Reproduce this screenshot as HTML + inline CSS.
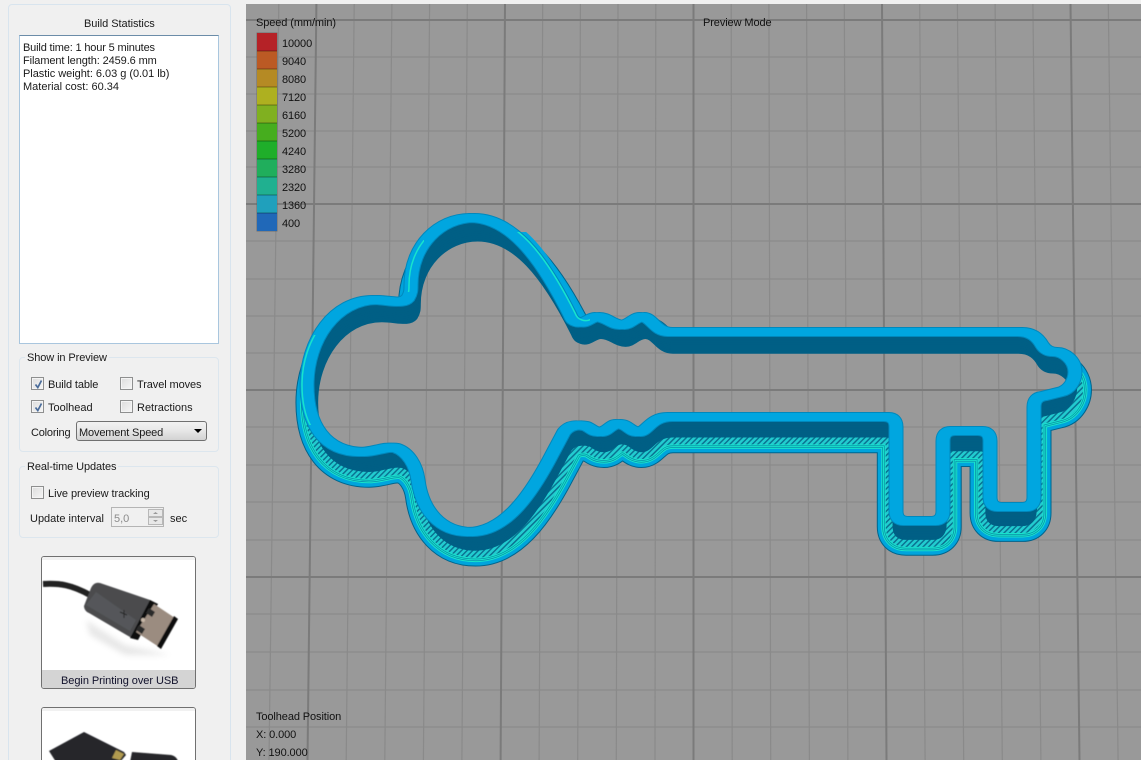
<!DOCTYPE html>
<html><head><meta charset="utf-8"><style>
html,body{margin:0;padding:0;width:1141px;height:760px;overflow:hidden;background:#f0f0f0}
body{position:relative;font-family:"Liberation Sans",sans-serif;font-size:11px;color:#1a1a1a}
.a{position:absolute;white-space:nowrap;line-height:13px;margin-top:1px}
.gb{position:absolute;border:1px solid #dce6ee;border-radius:4px;box-sizing:border-box}
.cb{position:absolute;width:13px;height:13px;box-sizing:border-box;border:1px solid #8e8f8f;background:linear-gradient(135deg,#dcdcdc,#f6f6f6);box-shadow:inset 0 0 0 1px #f4f4f4}
.cb svg{position:absolute;left:1px;top:1px}
.v{position:absolute;white-space:nowrap;line-height:13px;font-size:11px;color:#111;margin-top:1px;letter-spacing:-.1px}
</style></head><body>
<div class="gb" style="left:8px;top:4px;width:223px;height:780px;border-color:#d8e4ee"></div>
<div class="a" style="left:84px;top:17px;letter-spacing:-.05px">Build Statistics</div>
<div style="position:absolute;left:19px;top:35px;width:200px;height:309px;box-sizing:border-box;background:#fff;border:1px solid #a9c6de;border-top-color:#6b8ca8"></div>
<div class="a" style="left:23px;top:41px;letter-spacing:-.16px">Build time: 1 hour 5 minutes</div>
<div class="a" style="left:23px;top:54px;letter-spacing:-.1px">Filament length: 2459.6 mm</div>
<div class="a" style="left:23px;top:67px;letter-spacing:-.03px">Plastic weight: 6.03 g (0.01 lb)</div>
<div class="a" style="left:23px;top:80px;">Material cost: 60.34</div>

<div class="gb" style="left:19px;top:357px;width:200px;height:95px"></div>
<div class="a" style="left:25px;top:351px;background:#f0f0f0;padding:0 2px;letter-spacing:-.1px">Show in Preview</div>
<div class="cb" style="left:31px;top:377px"><svg width="11" height="11"><path d="M2.5 5.5L4.8 8.5L8.5 1.5" fill="none" stroke="#4a6c9a" stroke-width="1.7"/></svg></div>
<div class="a" style="left:48px;top:378px;letter-spacing:-.1px">Build table</div>
<div class="cb" style="left:120px;top:377px"></div>
<div class="a" style="left:137px;top:378px;letter-spacing:-.1px">Travel moves</div>
<div class="cb" style="left:31px;top:400px"><svg width="11" height="11"><path d="M2.5 5.5L4.8 8.5L8.5 1.5" fill="none" stroke="#4a6c9a" stroke-width="1.7"/></svg></div>
<div class="a" style="left:48px;top:401px">Toolhead</div>
<div class="cb" style="left:120px;top:400px"></div>
<div class="a" style="left:137px;top:401px">Retractions</div>
<div class="a" style="left:31px;top:426px;letter-spacing:-.2px">Coloring</div>
<div style="position:absolute;left:76px;top:421px;width:131px;height:20px;box-sizing:border-box;border:1px solid #707070;border-radius:3px;background:linear-gradient(#f2f2f2,#e8e8e8 45%,#d2d2d2)"></div>
<div class="a" style="left:79px;top:426px;letter-spacing:-.15px">Movement Speed</div>
<svg style="position:absolute;left:193px;top:428px" width="10" height="6"><path d="M1 1H9L5 5Z" fill="#000"/></svg>

<div class="gb" style="left:19px;top:466px;width:200px;height:72px"></div>
<div class="a" style="left:25px;top:460px;background:#f0f0f0;padding:0 2px;letter-spacing:-.1px">Real-time Updates</div>
<div class="cb" style="left:31px;top:486px"></div>
<div class="a" style="left:48px;top:487px;letter-spacing:-.05px">Live preview tracking</div>
<div class="a" style="left:30px;top:512px;">Update interval</div>
<div style="position:absolute;left:111px;top:507px;width:53px;height:20px;box-sizing:border-box;border:1px solid #b4b4b4;background:#f0f0f0"></div>
<div class="a" style="left:114px;top:512px;color:#8a8a8a">5,0</div>
<svg style="position:absolute;left:148px;top:509px" width="15" height="16"><rect x=".5" y=".5" width="14" height="7" fill="#e8e8e8" stroke="#b8b8b8"/><rect x=".5" y="8.5" width="14" height="7" fill="#e8e8e8" stroke="#b8b8b8"/><path d="M5 5L7.500 3L10 5ZM5 11L7.500 13L10 11Z" fill="#999"/></svg>
<div class="a" style="left:170px;top:512px">sec</div>

<!-- USB button -->
<div style="position:absolute;left:41px;top:556px;width:155px;height:133px;box-sizing:border-box;border:1px solid #707070;border-radius:3px;background:#fff;overflow:hidden">
<div style="position:absolute;left:0;top:0;right:0;height:3px;background:#f1f1f1"></div>
<div style="position:absolute;left:0;top:113px;right:0;bottom:0;background:#d4d4d4"></div>
</div>
<div class="a" style="left:61px;top:674px;color:#10102a;letter-spacing:-.05px">Begin Printing over USB</div>
<svg style="position:absolute;left:42px;top:560px" width="153" height="110" viewBox="42 560 153 110">
<defs><filter id="b1" x="-30%" y="-30%" width="160%" height="160%"><feGaussianBlur stdDeviation="3"/></filter><filter id="b0"><feGaussianBlur stdDeviation=".5"/></filter></defs>
<path d="M86 620L125 645L170 655L125 655L90 635Z" fill="#ccc" opacity=".45" filter="url(#b1)"/>
<g filter="url(#b0)">
<path d="M43 584C60 583 72 585 90 595" fill="none" stroke="#222" stroke-width="6"/>
<path d="M100 583C96 582 93 584 91 588L84 606C84 609 86 612 89 613L130 637C133 639 136 638 138 634L153 604C153 602 152 601 150 600Z" fill="#4b4c4e"/>
<path d="M86 605L130 631L136 620L96 592Z" fill="#55575a"/>
<path d="M150 600L130 638L138 640L158 604Z" fill="#111"/>
<path d="M154 604L175 618L159 647L136 632Z" fill="#9b8c80"/>
<path d="M174 616L178 619L161 649L157 646Z" fill="#111"/>
<path d="M149 608L155 612L152 617L146 613ZM139 625L145 629L142 634L136 630Z" fill="#2a2a2a"/>
<circle cx="143" cy="620" r="2" fill="#c8b8a8"/>
<path d="M120 612L127 615M124 610L124 618" stroke="#222" stroke-width="1" fill="none"/>
</g>
</svg>
<!-- SD button -->
<div style="position:absolute;left:41px;top:707px;width:155px;height:70px;box-sizing:border-box;border:1px solid #707070;border-radius:3px;background:#fff;overflow:hidden">
<div style="position:absolute;left:0;top:0;right:0;height:3px;background:#f1f1f1"></div>
</div>
<svg style="position:absolute;left:42px;top:708px" width="153" height="52" viewBox="42 708 153 52">
<g filter="url(#b0)">
<path d="M84 732L49 751L56 762H120L126 755L124 752Z" fill="#25262a"/>
<path d="M116 750L124 754L120 760L112 758Z" fill="#b09a50"/>
<path d="M132 752L171 755C176 756 178 760 178 762H130Z" fill="#25262a"/>
</g>
</svg>

<!-- GL view -->
<svg style="position:absolute;left:246px;top:4px" width="895" height="756" viewBox="246 4 895 756">
<defs>
<pattern id="h" width="4" height="4" patternUnits="userSpaceOnUse" patternTransform="rotate(45)"><rect width="4" height="4" fill="#22ccd0"/><rect width="1.500" height="4" fill="#0a7290"/></pattern>
<path id="k" d="M307 385C307 340 335 300 375 300C390 300 402 305 408 298C411 293 411 290 411 285C411 245 440 218 472 218C510 218 540 255 570 315C572 320 574 321 577 322C585 325 590 317 597 317C607 317 612 325 622 325C630 325 634 317 642 317C652 317 655 332 670 332L1020 332C1032 332 1038 338 1042 345C1045 350 1050 352 1055 352C1064 352 1075 360 1075 372C1075 380 1070 390 1060 392L1044 396Q1034 397 1034 407L1034 497Q1034 507 1024 507L1000 507Q990 507 990 497L990 441Q990 431 980 431L953 431Q943 431 943 441L943 511Q943 521 933 521L906 521Q896 521 896 511L896 427Q896 417 886 417L670 417C650 417 648 432 638 432C630 432 628 424 618 424C610 424 608 432 600 432C592 432 590 427 585 426C580 425 570 424 564 432L548 462C530 495 505 532 470 532C440 532 422 510 418 480C416 465 408 452 396 448C385 446 375 452 362 452C325 452 307 425 307 385Z"/>
<mask id="m" maskUnits="userSpaceOnUse" x="246" y="4" width="895" height="756"><rect x="246" y="4" width="895" height="756" fill="#fff"/><use href="#k" transform="matrix(.987 0 0 .985 11.7 23.3)" fill="#000"/></mask>
<clipPath id="cl"><path d="M290 335H345V425H290Z"/></clipPath>
<clipPath id="cr"><path d="M505 232L590 232V322H505Z"/></clipPath>
<clipPath id="ct"><path d="M392 240H424V292H392Z"/></clipPath>
</defs>
<rect x="246" y="4" width="895" height="756" fill="#999"/>
<path stroke="#8a8a8a" stroke-width="1.200" fill="none" d="M278.800 4L269 760M354.200 4L346.200 760M391.900 4L384.800 760M429.600 4L423.400 760M467.300 4L461.900 760M542.700 4L539.100 760M580.400 4L577.700 760M618 4L616.300 760M655.800 4L655 760M731.200 4L732.200 760M768.900 4L770.700 760M806.600 4L809.400 760M844.300 4L847.900 760M919.700 4L925.100 760M957.400 4L963.700 760M995.100 4L1002.300 760M1032.900 4L1040.900 760M1108.300 4L1118.100 760M246 57H1141M246 94H1141M246 131H1141M246 167H1141M246 241H1141M246 279H1141M246 316H1141M246 353H1141M246 427H1141M246 465H1141M246 502H1141M246 540H1141M246 614H1141M246 652H1141M246 690H1141M246 727H1141"/>
<path stroke="#7b7b7b" stroke-width="2" fill="none" d="M316.400 4L307.500 760M505 4L500.600 760M693.500 4L693.500 760M882 4L886.500 760M1070.500 4L1079.500 760M246 20H1141M246 204H1141M246 390H1141M246 577H1141"/>
<g mask="url(#m)" stroke-linejoin="round" fill="none">
<g transform="matrix(.987 0 0 .985 11.7 23.3)">
<use href="#k" stroke="#00648c" stroke-width="39"/>
<use href="#k" stroke="#00a4dc" stroke-width="37"/>
<use href="#k" stroke="#18e4cc" stroke-width="30"/>
<use href="#k" stroke="#0a8ea8" stroke-width="28"/>
<use href="#k" stroke="#18e4cc" stroke-width="26.500"/>
<use href="#k" stroke="#0a8ea8" stroke-width="24.500"/>
<use href="#k" stroke="#18e4cc" stroke-width="23"/>
<use href="#k" stroke="url(#h)" stroke-width="21"/>
</g>
</g>
<g stroke="#005f85" stroke-width="7" stroke-linejoin="round" fill="none">
<use href="#k" transform="matrix(.987 0 0 .985 11.7 23.3)"/>
<use href="#k" transform="matrix(.989 0 0 .987 10.5 21)"/>
<use href="#k" transform="matrix(.99 0 0 .988 9.4 18.6)"/>
<use href="#k" transform="matrix(.991 0 0 .99 8.2 16.3)"/>
<use href="#k" transform="matrix(.993 0 0 .991 7 14)"/>
<use href="#k" transform="matrix(.994 0 0 .992 5.900 11.600)"/>
<use href="#k" transform="matrix(.995 0 0 .994 4.700 9.300)"/>
<use href="#k" transform="matrix(.996 0 0 .995 3.500 7)"/>
<use href="#k" transform="matrix(.998 0 0 .997 2.300 4.700)"/>
<use href="#k" transform="matrix(.999 0 0 .999 1.200 2.300)"/>
</g>
<g fill="none" stroke-linejoin="round">
<!-- wider shoulder bands on the steep flanks -->
<g clip-path="url(#cr)"><use href="#k" transform="translate(6 -2)" stroke="#00a6e0" stroke-width="9"/></g>
<use href="#k" transform="translate(-2.500 0)" stroke="#0088bc" stroke-width="10"/>
<use href="#k" transform="translate(2.500 0)" stroke="#0088bc" stroke-width="10"/>
<use href="#k" transform="translate(-2.500 0)" stroke="#00a6e0" stroke-width="8"/>
<use href="#k" stroke="#00a6e0" stroke-width="8"/>
<use href="#k" transform="translate(2.500 0)" stroke="#00a6e0" stroke-width="8"/>
<!-- bright infill lines on the flanks -->
<g clip-path="url(#cl)"><use href="#k" transform="translate(-5 0)" stroke="#18e4cc" stroke-width="1.500"/></g>
<g clip-path="url(#ct)"><use href="#k" transform="translate(-2 0)" stroke="#18e4cc" stroke-width="1.500"/></g>
<g clip-path="url(#cr)"><use href="#k" transform="translate(5 -2)" stroke="#18e4cc" stroke-width="1.500"/></g>
</g>
<rect x="257" y="33" width="20" height="198" fill="none" stroke="#555" stroke-opacity=".6"/>
<g>
<rect x="257" y="33" width="20" height="18" fill="#b52227"/>
<rect x="257" y="51" width="20" height="18" fill="#bb5a24"/>
<rect x="257" y="69" width="20" height="18" fill="#b58a24"/>
<rect x="257" y="87" width="20" height="18" fill="#aeb020"/>
<rect x="257" y="105" width="20" height="18" fill="#80b020"/>
<rect x="257" y="123" width="20" height="18" fill="#46ad1e"/>
<rect x="257" y="141" width="20" height="18" fill="#1fae2a"/>
<rect x="257" y="159" width="20" height="18" fill="#20ae5c"/>
<rect x="257" y="177" width="20" height="18" fill="#20b090"/>
<rect x="257" y="195" width="20" height="18" fill="#20a0bc"/>
<rect x="257" y="213" width="20" height="18" fill="#2068b8"/>
<path d="M257 51H277M257 69H277M257 87H277M257 105H277M257 123H277M257 141H277M257 159H277M257 177H277M257 195H277M257 213H277" stroke="#000" stroke-opacity=".35"/>
</g>
</svg>
<div class="v" style="left:256px;top:16px">Speed (mm/min)</div>
<div class="v" style="left:703px;top:16px">Preview Mode</div>
<div class="v" style="left:282px;top:37px">10000</div>
<div class="v" style="left:282px;top:55px">9040</div>
<div class="v" style="left:282px;top:73px">8080</div>
<div class="v" style="left:282px;top:91px">7120</div>
<div class="v" style="left:282px;top:109px">6160</div>
<div class="v" style="left:282px;top:127px">5200</div>
<div class="v" style="left:282px;top:145px">4240</div>
<div class="v" style="left:282px;top:163px">3280</div>
<div class="v" style="left:282px;top:181px">2320</div>
<div class="v" style="left:282px;top:199px">1360</div>
<div class="v" style="left:282px;top:217px">400</div>
<div class="v" style="left:256px;top:710px">Toolhead Position</div>
<div class="v" style="left:256px;top:728px">X: 0.000</div>
<div class="v" style="left:256px;top:746px">Y: 190.000</div>
</body></html>
